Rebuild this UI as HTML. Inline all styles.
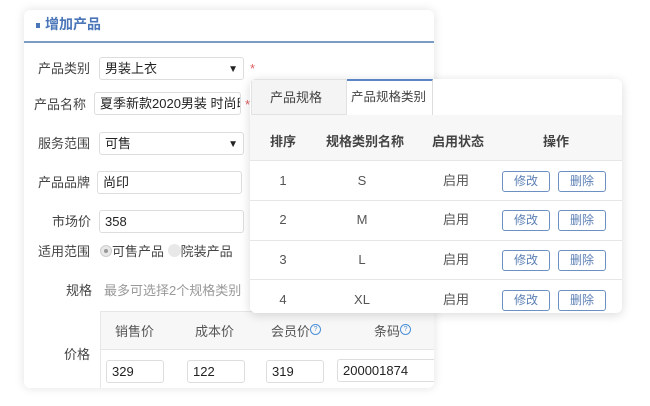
<!DOCTYPE html>
<html><head><meta charset="utf-8"><style>
*{box-sizing:border-box;margin:0;padding:0}
body{width:650px;height:406px;background:#fff;font-family:"Liberation Sans","Noto Sans CJK SC",sans-serif;font-size:13px;line-height:17px;color:#333;position:relative;overflow:hidden}
.card{position:absolute;left:24px;top:10px;width:410px;height:378px;background:#fff;border-radius:6px;box-shadow:0 0 10px rgba(0,0,0,.12);overflow:hidden}
.hd{position:absolute;left:0;top:0;width:100%;height:33px;border-bottom:2px solid #7a9cc6;color:#4a76b8;font-size:14px;font-weight:bold;padding:6px 0 0 12px}
.hd i{display:inline-block;width:4px;height:5px;background:#4a76b8;margin-right:5px;vertical-align:middle}
.ab{position:absolute}
.lbl{position:absolute;text-align:right;color:#444}
.in{position:absolute;border:1px solid #ddd;border-radius:3px;height:23px;padding:2px 5px;color:#222;background:#fff;white-space:nowrap;overflow:hidden}
.star{position:absolute;color:#e06060}
.pop{position:absolute;left:250px;top:79px;width:372px;height:234px;background:#fff;border-radius:6px;box-shadow:0 2px 10px rgba(0,0,0,.15);overflow:hidden}
.t1{position:absolute;left:1px;top:0;width:96px;height:36px;background:#f4f4f4;border:1px solid #e2e2e2;padding:9px 0 0 18px;color:#444}
.t2{position:absolute;left:97px;top:0;width:86px;height:37px;background:#fff;border-top:2px solid #5b86c5;border-right:1px solid #ddd;padding:8px 0 0 4px;color:#444;white-space:nowrap;font-size:12.5px}
.th{position:absolute;top:36px;left:0;width:100%;height:45px;background:#f7f7f7;font-weight:bold;color:#444}
.c{position:absolute;transform:translateX(-50%);white-space:nowrap}
.row{position:absolute;left:0;width:100%;height:40px;border-top:1px solid #e6e6e6;color:#555}
.b{position:absolute;width:48px;height:21px;border:1px solid #6d90c2;border-radius:3px;color:#5b7fb5;font-size:12px;text-align:center;line-height:19px}
.q{display:inline-block;width:11px;height:11px;border:1px solid #4a90d8;border-radius:50%;font-size:7px;line-height:9px;text-align:center;color:#4a90d8;vertical-align:top;margin-top:1px}
</style></head><body>
<div class="card">
<div class="hd"><i></i>增加产品</div>
<div class="lbl" style="left:14px;top:50px">产品类别</div>
<div class="in" style="left:75px;top:47px;width:145px">男装上衣<span style="position:absolute;right:5px;font-size:10px;top:3px">▼</span></div>
<div class="star" style="left:226px;top:50px">*</div>
<div class="lbl" style="left:10px;top:86px">产品名称</div>
<div class="in" style="left:70px;top:82px;width:147px">夏季新款2020男装 时尚印</div>
<div class="star" style="left:221px;top:86px">*</div>
<div class="lbl" style="left:14px;top:125px">服务范围</div>
<div class="in" style="left:75px;top:122px;width:145px">可售<span style="position:absolute;right:5px;font-size:10px;top:3px">▼</span></div>
<div class="lbl" style="left:14px;top:164px">产品品牌</div>
<div class="in" style="left:73px;top:161px;width:145px">尚印</div>
<div class="lbl" style="left:28px;top:203px">市场价</div>
<div class="in" style="left:75px;top:200px;width:145px">358</div>
<div class="lbl" style="left:14px;top:233px">适用范围</div>
<div class="ab" style="left:76px;top:233px;color:#444"><span style="display:inline-block;width:12px;height:12px;border-radius:50%;background:#e8e8e8;border:1px solid #ccc;vertical-align:-1px;position:relative"><span style="position:absolute;left:3px;top:3px;width:4px;height:4px;border-radius:50%;background:#999"></span></span>可售产品 <span style="display:inline-block;width:13px;height:13px;border-radius:50%;background:#e8e8e8;vertical-align:-1px"></span>院装产品</div>
<div class="lbl" style="left:42px;top:272px">规格</div>
<div class="ab" style="left:80px;top:272px;color:#999">最多可选择2个规格类别</div>
<div class="ab" style="left:76px;top:301px;width:340px;height:80px;border-left:1px solid #e6e6e6;border-top:1px solid #e6e6e6"></div>
<div class="ab" style="left:77px;top:302px;width:340px;height:38px;background:#f7f7f7;border-bottom:1px solid #e6e6e6"></div>
<div class="ab" style="left:91px;top:313px;color:#555">销售价</div>
<div class="ab" style="left:171px;top:313px;color:#555">成本价</div>
<div class="ab" style="left:247px;top:313px;color:#555">会员价<span class="q">?</span></div>
<div class="ab" style="left:350px;top:313px;color:#555">条码<span class="q">?</span></div>
<div class="lbl" style="left:40px;top:336px">价格</div>
<div class="in" style="left:82px;top:350px;width:58px">329</div>
<div class="in" style="left:163px;top:350px;width:58px">122</div>
<div class="in" style="left:242px;top:350px;width:58px">319</div>
<div class="in" style="left:313px;top:349px;width:100px">200001874</div>
</div>
<div class="pop">
<div class="t1">产品规格</div>
<div class="t2">产品规格类别</div>
<div class="ab" style="left:183px;top:36px;width:189px;border-top:1px solid #e6e6e6"></div>
<div class="th"><span class="c" style="left:33px;top:18px">排序</span><span class="c" style="left:115px;top:18px">规格类别名称</span><span class="c" style="left:208px;top:18px">启用状态</span><span class="c" style="left:306px;top:18px">操作</span></div>
<div class="row" style="top:81px"><span class="c" style="left:33px;top:11px">1</span><span class="c" style="left:112px;top:11px">S</span><span class="c" style="left:206px;top:11px">启用</span><div class="b" style="left:252px;top:10px">修改</div><div class="b" style="left:308px;top:10px">删除</div></div>
<div class="row" style="top:121px"><span class="c" style="left:33px;top:10px">2</span><span class="c" style="left:112px;top:10px">M</span><span class="c" style="left:206px;top:10px">启用</span><div class="b" style="left:252px;top:9px">修改</div><div class="b" style="left:308px;top:9px">删除</div></div>
<div class="row" style="top:161px"><span class="c" style="left:33px;top:10px">3</span><span class="c" style="left:112px;top:10px">L</span><span class="c" style="left:206px;top:10px">启用</span><div class="b" style="left:252px;top:9px">修改</div><div class="b" style="left:308px;top:9px">删除</div></div>
<div class="row" style="top:200px"><span class="c" style="left:33px;top:11px">4</span><span class="c" style="left:112px;top:11px">XL</span><span class="c" style="left:206px;top:11px">启用</span><div class="b" style="left:252px;top:10px">修改</div><div class="b" style="left:308px;top:10px">删除</div></div>
</div>
</body></html>
